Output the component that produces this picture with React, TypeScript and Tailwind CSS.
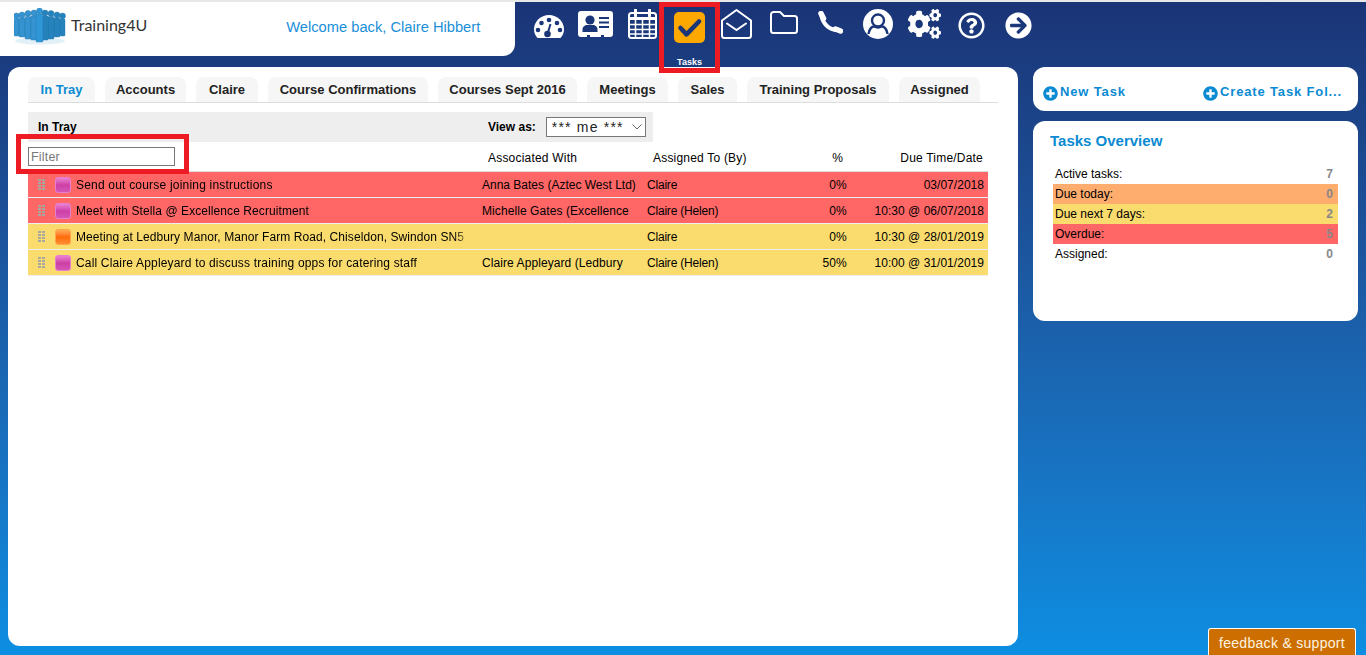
import type { ReactNode } from "react";
import { FaRegQuestionCircle, FaArrowCircleRight, FaCogs, FaPlusCircle } from "react-icons/fa";

const tabs = [
  { t: "In Tray", w: "w-[67px]" },
  { t: "Accounts", w: "w-[81px]" },
  { t: "Claire", w: "w-[62px]" },
  { t: "Course Confirmations", w: "w-[160px]" },
  { t: "Courses Sept 2016", w: "w-[139px]" },
  { t: "Meetings", w: "w-[81px]" },
  { t: "Sales", w: "w-[59px]" },
  { t: "Training Proposals", w: "w-[142px]" },
  { t: "Assigned", w: "w-[81px]" },
];

const rows = [
  { bg: "bg-[#ff6666]", pink: true, t: "Send out course joining instructions", tt: "tracking-[0.2px]", a: "Anna Bates (Aztec West Ltd)", at: "tracking-[0px]", b: "Claire", p: "0%", d: "03/07/2018" },
  { bg: "bg-[#ff6666]", pink: true, t: "Meet with Stella @ Excellence Recruitment", tt: "tracking-[0.08px]", a: "Michelle Gates (Excellence", at: "tracking-[0.08px]", b: "Claire (Helen)", p: "0%", d: "10:30 @ 06/07/2018" },
  { bg: "bg-[#fadc6e]", pink: false, t: "Meeting at Ledbury Manor, Manor Farm Road, Chiseldon, Swindon SN5", tt: "tracking-[0.08px]", a: "", at: "", b: "Claire", p: "0%", d: "10:30 @ 28/01/2019" },
  { bg: "bg-[#fadc6e]", pink: true, t: "Call Claire Appleyard to discuss training opps for catering staff", tt: "tracking-[0.17px]", a: "Claire Appleyard (Ledbury", at: "tracking-[0.08px]", b: "Claire (Helen)", p: "50%", d: "10:00 @ 31/01/2019" },
];

const stats = [
  { l: "Active tasks:", v: "7", bg: "" },
  { l: "Due today:", v: "0", bg: "bg-[#ffad6f]" },
  { l: "Due next 7 days:", v: "2", bg: "bg-[#fadc6e]" },
  { l: "Overdue:", v: "5", bg: "bg-[#ff6666]" },
  { l: "Assigned:", v: "0", bg: "" },
];

const NAVY = "#1a3678";

function Logo() {
  const people = [
    { x: 2.500, head: 8, bottom: 28, w: 5 },
    { x: 48.500, head: 8, bottom: 28, w: 5 },
    { x: 8, head: 7, bottom: 29, w: 6 },
    { x: 43, head: 7, bottom: 29, w: 6 },
    { x: 14, head: 5.500, bottom: 31, w: 6 },
    { x: 37, head: 5.500, bottom: 31, w: 6 },
    { x: 20, head: 5, bottom: 32, w: 6.500 },
    { x: 31, head: 5, bottom: 32, w: 6.500 },
    { x: 25.500, head: 3, bottom: 34, w: 7 },
  ];
  return (
    <svg width="52" height="37" viewBox="0 0 52 37" className="shrink-0">
      <ellipse cx="26" cy="33" rx="25" ry="3.500" fill="#e3f0f8" />
      {people.map((p, i) => (
        <g key={i} fill={i === 8 ? "#2f97d6" : i % 2 ? "#2682bc" : "#3493d0"} stroke="#1f74aa" strokeWidth="0.400">
          <circle cx={p.x} cy={p.head} r="3" />
          <rect x={p.x - p.w / 2} y={p.head + 3} width={p.w} height={p.bottom - p.head - 3} rx="1" />
        </g>
      ))}
    </svg>
  );
}

function Gauge() {
  return (
    <svg width="30" height="23" viewBox="0 0 30 23" className="mt-[13px]">
      <path d="M3.500 23C1.200 20.500 0 17.500 0 14.500C0 6.500 6.700 0 15 0s15 6.500 15 14.500c0 3-1.200 6-3.500 8.500z" fill="#fff" />
      <g fill={NAVY}>
        <circle cx="15" cy="5" r="2.300" />
        <circle cx="7.500" cy="8" r="2.300" />
        <circle cx="23" cy="8" r="2.300" />
        <circle cx="4" cy="15" r="2.300" />
        <circle cx="26" cy="15" r="2.300" />
        <circle cx="13.500" cy="19" r="3.300" />
      </g>
      <path d="M16.500 9l-3 10" stroke={NAVY} strokeWidth="2" />
    </svg>
  );
}

function CardIcon() {
  return (
    <svg width="35" height="26" viewBox="0 0 35 26" className="mt-[9px]">
      <path d="M3 0h29a3 3 0 0 1 3 3v20a3 3 0 0 1-3 3h-6v-2h-3v2H12v-2H9v2H3a3 3 0 0 1-3-3V3a3 3 0 0 1 3-3z" fill="#fff" />
      <circle cx="12" cy="9" r="4.600" fill={NAVY} />
      <path d="M4.500 21v-2.500c0-3 2.500-4.500 4.500-4.500h6c2 0 4.500 1.500 4.500 4.500V21z" fill={NAVY} />
      <path d="M21 7h10M21 11.500h10M21 16h10" stroke={NAVY} strokeWidth="2" />
    </svg>
  );
}

function Calendar() {
  return (
    <svg width="29" height="30" viewBox="0 0 29 30" fill="none" className="mt-[7px]">
      <rect x="1" y="4" width="27" height="25" rx="2.500" stroke="#fff" strokeWidth="2" />
      <path d="M1 9.500h27" stroke="#fff" strokeWidth="3" />
      <path d="M1 15.500h27M1 20.500h27M1 25h27M7.500 10v19M14.500 10v19M21.500 10v19" stroke="#fff" strokeWidth="1.500" />
      <path d="M7.500 1v6M21.500 1v6" stroke="#fff" strokeWidth="3" strokeLinecap="round" />
    </svg>
  );
}

function Envelope() {
  return (
    <svg width="31" height="30" viewBox="0 0 31 30" fill="none" stroke="#fff" strokeWidth="2" className="mt-[7px]">
      <path d="M1 11.500L15.500 1 30 11.500V26.500a2.500 2.500 0 0 1-2.500 2.500h-24A2.500 2.500 0 0 1 1 26.500z" strokeLinejoin="round" />
      <path d="M6 14.500l9.500 6.500 9.500-6.500" strokeLinecap="round" />
    </svg>
  );
}

function Folder() {
  return (
    <svg width="28" height="23" viewBox="0 0 28 23" fill="none" stroke="#fff" strokeWidth="2" className="mt-[9px]">
      <path d="M3.500 1H10l4 4h10.500A2.500 2.500 0 0 1 27 7.500v12a2.500 2.500 0 0 1-2.500 2.500h-21A2.500 2.500 0 0 1 1 19.500v-16A2.500 2.500 0 0 1 3.500 1z" strokeLinejoin="round" />
    </svg>
  );
}

function Phone() {
  return (
    <svg width="25" height="23" viewBox="0 0 25 23" fill="none" stroke="#fff" strokeLinecap="round" className="mt-[9px]">
      <path d="M3.500 4.500C4.500 12 11 19.500 20 19" strokeWidth="4" />
      <path d="M3 2.500l2.500 5" strokeWidth="5.500" />
      <path d="M17.500 18l5 2" strokeWidth="5.500" />
    </svg>
  );
}

function User() {
  return (
    <svg width="30" height="30" viewBox="0 0 30 30" className="mt-[7px]">
      <circle cx="15" cy="15" r="15" fill="#fff" />
      <circle cx="15" cy="11.500" r="6" fill="#fff" stroke={NAVY} strokeWidth="2.400" />
      <path d="M5.500 25c.5-5 3.500-7.500 5.500-7.500 1.500 0 2 1 4 1s2.500-1 4-1c2 0 5 2.500 5.500 7.500" fill="#fff" stroke={NAVY} strokeWidth="2.400" />
    </svg>
  );
}

function NavCell({ children }: { children: ReactNode }) {
  return <div className="w-[47px] flex justify-center items-start">{children}</div>;
}

function Nav() {
  return (
    <nav className="flex items-start ml-[10px] h-[66px]">
      <NavCell><Gauge /></NavCell>
      <NavCell><CardIcon /></NavCell>
      <NavCell><Calendar /></NavCell>
      <div className="w-[47px] flex flex-col items-center">
        <svg width="31" height="31" viewBox="0 0 31 31" className="mt-[10px] shrink-0">
          <rect width="31" height="31" rx="5" fill="#fda800" />
          <path d="M6.500 16l6 6.300L25 9.500" fill="none" stroke={NAVY} strokeWidth="4.600" strokeLinecap="round" strokeLinejoin="round" />
        </svg>
        <span className="mt-[14px] text-[9px] leading-[11px] font-bold tracking-normal text-white">Tasks</span>
      </div>
      <NavCell><Envelope /></NavCell>
      <NavCell><Folder /></NavCell>
      <NavCell><Phone /></NavCell>
      <NavCell><User /></NavCell>
      <NavCell><FaCogs className="w-[33px] h-[30px] mt-[7px] text-white" preserveAspectRatio="none" /></NavCell>
      <NavCell><FaRegQuestionCircle size={27} className="mt-[10px] text-white" /></NavCell>
      <NavCell><FaArrowCircleRight size={27} className="mt-[10px] text-white" /></NavCell>
    </nav>
  );
}

function Handle() {
  return (
    <div className="w-[7px] grid grid-cols-2 gap-[1px] ml-[10px] mr-[10px] shrink-0">
      {Array.from({ length: 8 }).map((_, i) => <span key={i} className="w-[3px] h-[2px] bg-[#a8a8a0]" />)}
    </div>
  );
}

function Pill({ pink }: { pink: boolean }) {
  return (
    <span className={`w-[16px] h-[16px] shrink-0 rounded-[3px] border ${pink ? "border-[#e57fd0] bg-gradient-to-b from-[#ea80d2] via-[#cc3fa6] to-[#d655b4]" : "border-[#ffa64d] bg-gradient-to-b from-[#ffab55] via-[#ff6a00] to-[#ff9030]"}`} />
  );
}

export default function App() {
  return (
    <div className="relative w-[1366px] h-[655px] overflow-hidden bg-gradient-to-b from-[#1a3476] to-[#0c8ee2] font-['Liberation_Sans',Arial,sans-serif] text-[12px] tracking-[0.2px] text-black">
      <div className="h-[2px] bg-[#e8e8e8]" />
      <header className="flex h-[54px]">
        <div className="w-[515px] h-[54px] bg-white rounded-br-[12px] flex items-start tracking-normal">
          <div className="ml-[14px] mt-[6px]"><Logo /></div>
          <span className="ml-[5px] mt-[13px] text-[16px] leading-[20px] text-[#333333] font-['Lato',sans-serif]">Training4U</span>
          <span className="ml-[139px] mt-[16px] text-[14.700px] leading-[18px] text-[#1a8fd8]">Welcome back, Claire Hibbert</span>
        </div>
        <Nav />
      </header>

      <div className="flex mt-[11px] ml-[8px] gap-[15px]">
        <main className="w-[1010px] h-[579px] bg-white rounded-[12px] pt-[10px] pl-[20px]">
          <div className="w-[970px] flex gap-[10px] border-b border-[#dddddd] h-[26px]">
            {tabs.map((x, i) => (
              <div key={x.t} className={`${x.w} h-[25px] rounded-t-[8px] bg-[#f6f6f6] text-[13px] text-center leading-[26px] font-bold whitespace-nowrap tracking-normal ${i === 0 ? "text-[#0a8ad2]" : "text-[#222222]"}`}>{x.t}</div>
            ))}
          </div>
          <div className="w-[625px] h-[30px] mt-[9px] bg-[#eeeeee] flex items-center">
            <span className="ml-[10px] w-[450px] font-bold tracking-normal">In Tray</span>
            <span className="font-bold tracking-normal">View as:</span>
            <div className="ml-[10px] w-[100px] h-[20px] bg-white border border-[#777777] flex items-center pl-[5px] text-[14px] tracking-[1.2px] text-[#222222]">
              <span className="flex-1 whitespace-nowrap">*** me ***</span>
              <svg width="10" height="6" viewBox="0 0 10 6" fill="none" stroke="#666666" className="mr-[3px] shrink-0"><path d="M.5.500L5 5 9.500.500" /></svg>
            </div>
          </div>
          <div className="flex items-center h-[29px] w-[960px]">
            <input readOnly placeholder="Filter" className="w-[147px] h-[19px] border border-[#777777] px-[2px] text-[12.500px] placeholder:text-[#777777] outline-none" />
            <span className="ml-[313px] w-[165px] mt-[2px]">Associated With</span>
            <span className="w-[165px] mt-[2px]">Assigned To (By)</span>
            <span className="w-[25px] text-right mt-[2px]">%</span>
            <span className="flex-1 text-right pr-[5px] mt-[2px]">Due Time/Date</span>
          </div>
          <div className="w-[960px] border-t border-[#dddddd]">
            {rows.map((r) => (
              <div key={r.t} className={`${r.bg} h-[26px] border-b border-[#eeeeee] flex items-center`}>
                <Handle />
                <Pill pink={r.pink} />
                <span className={`${r.tt} ml-[5px] w-[390px] overflow-hidden whitespace-nowrap shrink-0 [mask-image:linear-gradient(to_right,black_97%,rgba(0,0,0,0.35))]`}>{r.t}</span>
                <span className={`${r.at} ml-[16px] w-[155px] whitespace-nowrap shrink-0`}>{r.a}</span>
                <span className="ml-[10px] w-[150px] shrink-0 tracking-[-0.2px]">{r.b}</span>
                <span className="w-[50px] text-right shrink-0">{r.p}</span>
                <span className="flex-1 text-right pr-[4px] tracking-[0.03px]">{r.d}</span>
              </div>
            ))}
          </div>
        </main>

        <aside className="w-[325px] flex flex-col gap-[10px]">
          <div className="h-[44px] bg-white rounded-[12px] flex items-center justify-between pl-[10px] pr-[16px] pt-[5px] text-[13px] font-bold tracking-[0.85px] text-[#0a8ad2]">
            <span className="flex items-center"><FaPlusCircle size={15} className="mt-[4px] mr-[2px]" />New Task</span>
            <span className="flex items-center"><FaPlusCircle size={15} className="mt-[4px] mr-[2px]" />Create Task Fol...</span>
          </div>
          <div className="h-[200px] bg-white rounded-[12px] pt-[11px] pl-[17px] pr-[20px]">
            <div className="text-[15px] leading-[18px] font-bold tracking-normal text-[#0a8ad2]">Tasks Overview</div>
            <div className="mt-[14px] ml-[3px] tracking-normal">
              {stats.map((s) => (
                <div key={s.l} className={`${s.bg} h-[20px] flex items-center justify-between pl-[2px] pr-[5px]`}>
                  <span>{s.l}</span>
                  <span className="font-bold text-[#888888]">{s.v}</span>
                </div>
              ))}
            </div>
          </div>
        </aside>
      </div>

      <div className="absolute left-[1208px] top-[628px] w-[148px] h-[27px] bg-[#cc6f00] border border-white border-b-0 rounded-t-[3px] text-[14px] leading-[28px] tracking-[0.3px] text-center text-[#fff3e0]">feedback &amp; support</div>
      <div className="absolute left-[659px] top-[2px] w-[61px] h-[71px] border-[5px] border-[#ed1c24]" />
      <div className="absolute left-[16px] top-[134px] w-[173px] h-[40px] border-[5px] border-[#ed1c24]" />
    </div>
  );
}
